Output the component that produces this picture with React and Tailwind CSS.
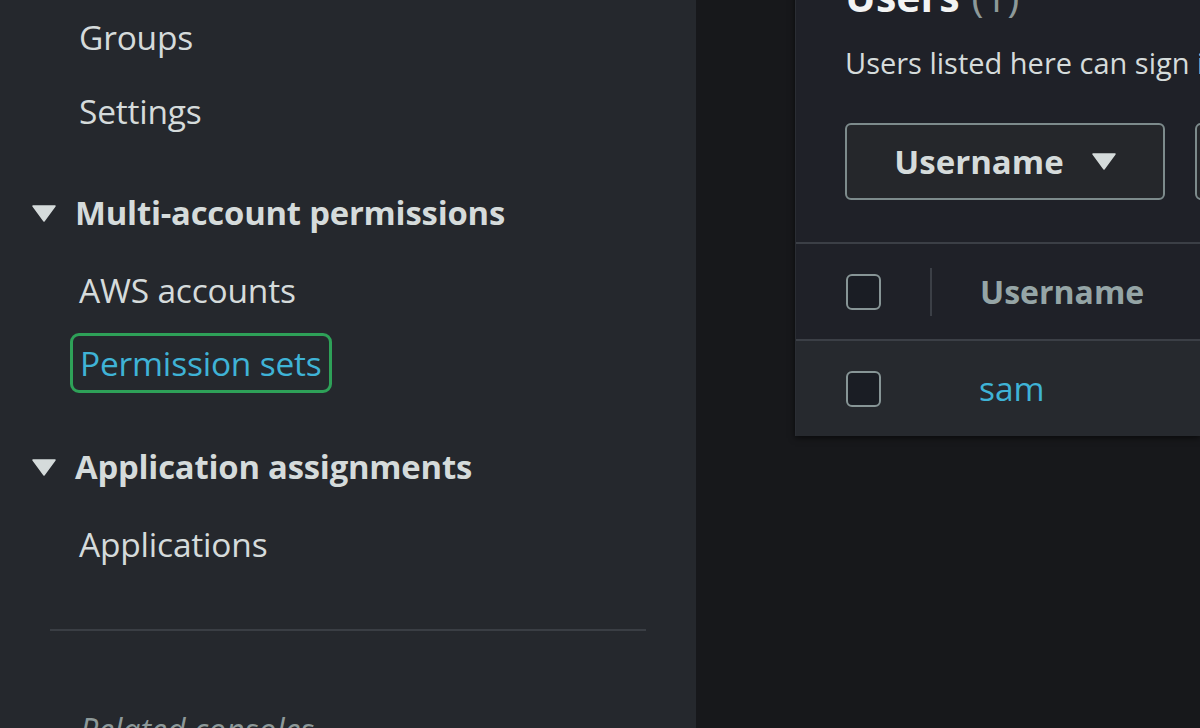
import React from "react";

const font = { fontFamily: '"Open Sans", "Noto Sans", sans-serif' };

function Caret({ className = "" }) {
  return (
    <svg viewBox="0 0 24 17" className={className}>
      <polygon points="1,1 23,1 12,16" fill="currentColor" stroke="currentColor" strokeWidth="1.5" strokeLinejoin="round" />
    </svg>
  );
}

function NavLink({ children, h = "h-[74px]" }) {
  return (
    <div className={`${h} flex items-center pl-[79px] text-[33.5px] tracking-[-0.2px] text-[#d5dbdb]`}>{children}</div>
  );
}

function SectionHead({ children }) {
  return (
    <div className="h-[70px] flex items-center pl-[32px] gap-[19px] text-[32.8px] font-bold tracking-[-0.2px] text-[#d5dbdb]">
      <Caret className="w-[24px] h-[17px] text-[#d5dbdb]" />
      <span>{children}</span>
    </div>
  );
}

function Checkbox() {
  return <div className="w-[35px] h-[36px] rounded-[6px] border-2 border-[#879596] bg-[#1a1d24]" />;
}

export default function App() {
  return (
    <div style={font} className="w-[1200px] h-[728px] overflow-hidden flex bg-[#17181b]">
      {/* Side navigation */}
      <aside className="w-[696px] shrink-0 bg-[#25282d] flex flex-col [&>*]:shrink-0">
        <NavLink>Groups</NavLink>
        <NavLink>Settings</NavLink>
        <div className="h-[30px]" />
        <SectionHead>Multi-account permissions</SectionHead>
        <div className="h-[4px]" />
        <NavLink h="h-[76px]">AWS accounts</NavLink>
        <div className="h-[70px] flex items-center pl-[70px]">
          <span className="h-[60px] flex items-center px-[7px] border-[3px] border-[#2ea158] rounded-[9px] text-[33.5px] tracking-[-0.2px] text-[#3fb3d6]">
            Permission sets
          </span>
        </div>
        <div className="h-[34px]" />
        <SectionHead>Application assignments</SectionHead>
        <div className="h-[4px]" />
        <NavLink h="h-[76px]">Applications</NavLink>
        <div className="mt-[47px] mx-[50px] h-[2px] bg-[#3a3e44]" />
        <div className="mt-[83px] pl-[80px] text-[32px] italic text-[#8d9999] leading-none whitespace-nowrap">Related consoles</div>
      </aside>

      {/* Main content */}
      <main className="flex-1 pl-[99px] min-w-0">
        <div className="-mt-[29px] bg-[#1f2128] shadow-[0_2px_6px_rgba(0,0,0,0.6)] border-l border-[#2a2d33]">
          <div className="pl-[49px]">
            <h1 className="h-[52px] flex items-center text-[41px] font-bold text-[#f2f3f3] whitespace-nowrap">
              Users <span className="ml-[12px] font-normal text-[#8d9999]">(1)</span>
            </h1>
            <p className="mt-[20px] h-[40px] flex items-center text-[29px] text-[#d5dbdb] whitespace-nowrap">
              Users listed here can sign in to the AWS access portal
            </p>
            <div className="mt-[40px] flex gap-[30px] whitespace-nowrap">
              <div className="w-[320px] h-[77px] shrink-0 rounded-[6px] border-2 border-[#7d8b8c] bg-[#25272b] flex items-center justify-center gap-[28px] text-[33px] font-bold text-[#d5dbdb]">
                <span>Username</span>
                <Caret className="w-[24px] h-[17px] text-[#d5dbdb]" />
              </div>
              <div className="w-[300px] h-[77px] shrink-0 rounded-[6px] border-2 border-[#7d8b8c] bg-[#25272b]" />
            </div>
          </div>
          <div className="mt-[42px] border-t-2 border-[#3b3f46]">
            <div className="h-[95px] flex items-center pl-[50px]">
              <Checkbox />
              <div className="ml-[49px] w-[2px] h-[48px] bg-[#3b3f46]" />
              <span className="ml-[48px] text-[32px] font-bold text-[#95a5a6]">Username</span>
            </div>
          </div>
          <div className="border-t-2 border-[#3b3f46] bg-[#26292e]">
            <div className="h-[95px] flex items-center pl-[50px]">
              <Checkbox />
              <span className="ml-[98px] text-[33.5px] text-[#3fb3d6]">sam</span>
            </div>
          </div>
        </div>
      </main>
    </div>
  );
}
